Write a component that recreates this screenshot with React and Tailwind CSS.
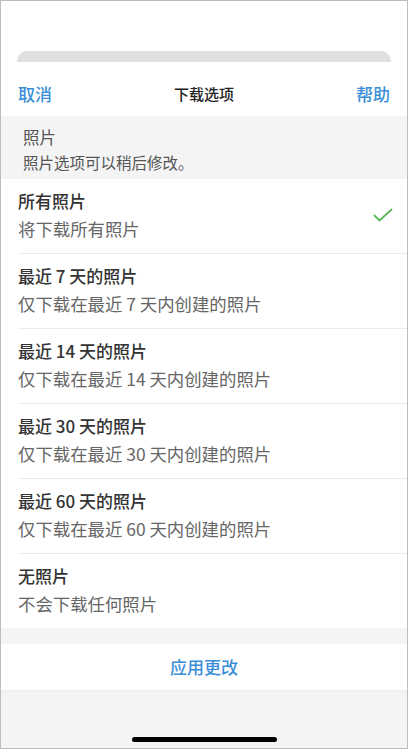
const options = [
  { title: '所有照片', desc: '将下载所有照片', selected: true },
  { title: '最近 7 天的照片', desc: '仅下载在最近 7 天内创建的照片' },
  { title: '最近 14 天的照片', desc: '仅下载在最近 14 天内创建的照片' },
  { title: '最近 30 天的照片', desc: '仅下载在最近 30 天内创建的照片' },
  { title: '最近 60 天的照片', desc: '仅下载在最近 60 天内创建的照片' },
  { title: '无照片', desc: '不会下载任何照片' },
];

function Check() {
  return (
    <svg width="20" height="15" viewBox="0 0 20 15" fill="none">
      <polyline
        points="1.5,7.5 6.5,12.5 18.5,1.5"
        stroke="#5cb85c"
        strokeWidth="1.8"
        strokeLinecap="round"
        strokeLinejoin="round"
      />
    </svg>
  );
}

function OptionRow({ option, last }) {
  return (
    <div className="pl-[17px] bg-white">
      <div
        className={`flex items-center pr-[14px] pt-[11px] pb-[13px] ${
          last ? '' : 'border-b border-[#ececec]'
        }`}
      >
        <div className="flex-1">
          <p className="text-[17px] leading-[22px] font-medium text-[#333]">{option.title}</p>
          <p className="mt-[6px] text-[17.4px] leading-[22px] text-[#666]">{option.desc}</p>
        </div>
        {option.selected && <Check />}
      </div>
    </div>
  );
}

export default function App() {
  return (
    <div
      className="w-[408px] h-[749px] border border-[#bdbdbd] bg-white flex flex-col overflow-hidden"
      style={{ fontFamily: '"Noto Sans CJK SC", "Noto Sans", sans-serif' }}
    >
      <div className="mx-[16px] mt-[50px] h-[11px] rounded-t-[10px] bg-[#e0e0e0]"></div>

      <div className="h-[54px] pt-[10px] px-[17px] flex items-center justify-between">
        <button className="text-[17px] text-[#3b8ed6] font-medium">取消</button>
        <h1 className="text-[15px] font-medium text-[#222]">下载选项</h1>
        <button className="text-[17px] text-[#3b8ed6] font-medium">帮助</button>
      </div>

      <div className="bg-[#f4f4f4] pl-[22px] pt-[11px] pb-[7px]">
        <p className="text-[16.5px] leading-[20px] text-[#555]">照片</p>
        <p className="mt-[5px] text-[15.5px] leading-[20px] text-[#555]">照片选项可以稍后修改。</p>
      </div>

      <div>
        {options.map((o, i) => (
          <OptionRow key={o.title} option={o} last={i === options.length - 1} />
        ))}
      </div>

      <div className="flex-1 bg-[#f4f4f4] flex flex-col">
        <div className="mt-[16px] h-[47px] bg-white border-b border-[#ececec] flex items-center justify-center">
          <button className="text-[17px] font-medium text-[#3b8ed6]">应用更改</button>
        </div>
        <div className="flex-1 flex items-end justify-center pb-[6px]">
          <div className="w-[145px] h-[5px] rounded-full bg-black"></div>
        </div>
      </div>
    </div>
  );
}
